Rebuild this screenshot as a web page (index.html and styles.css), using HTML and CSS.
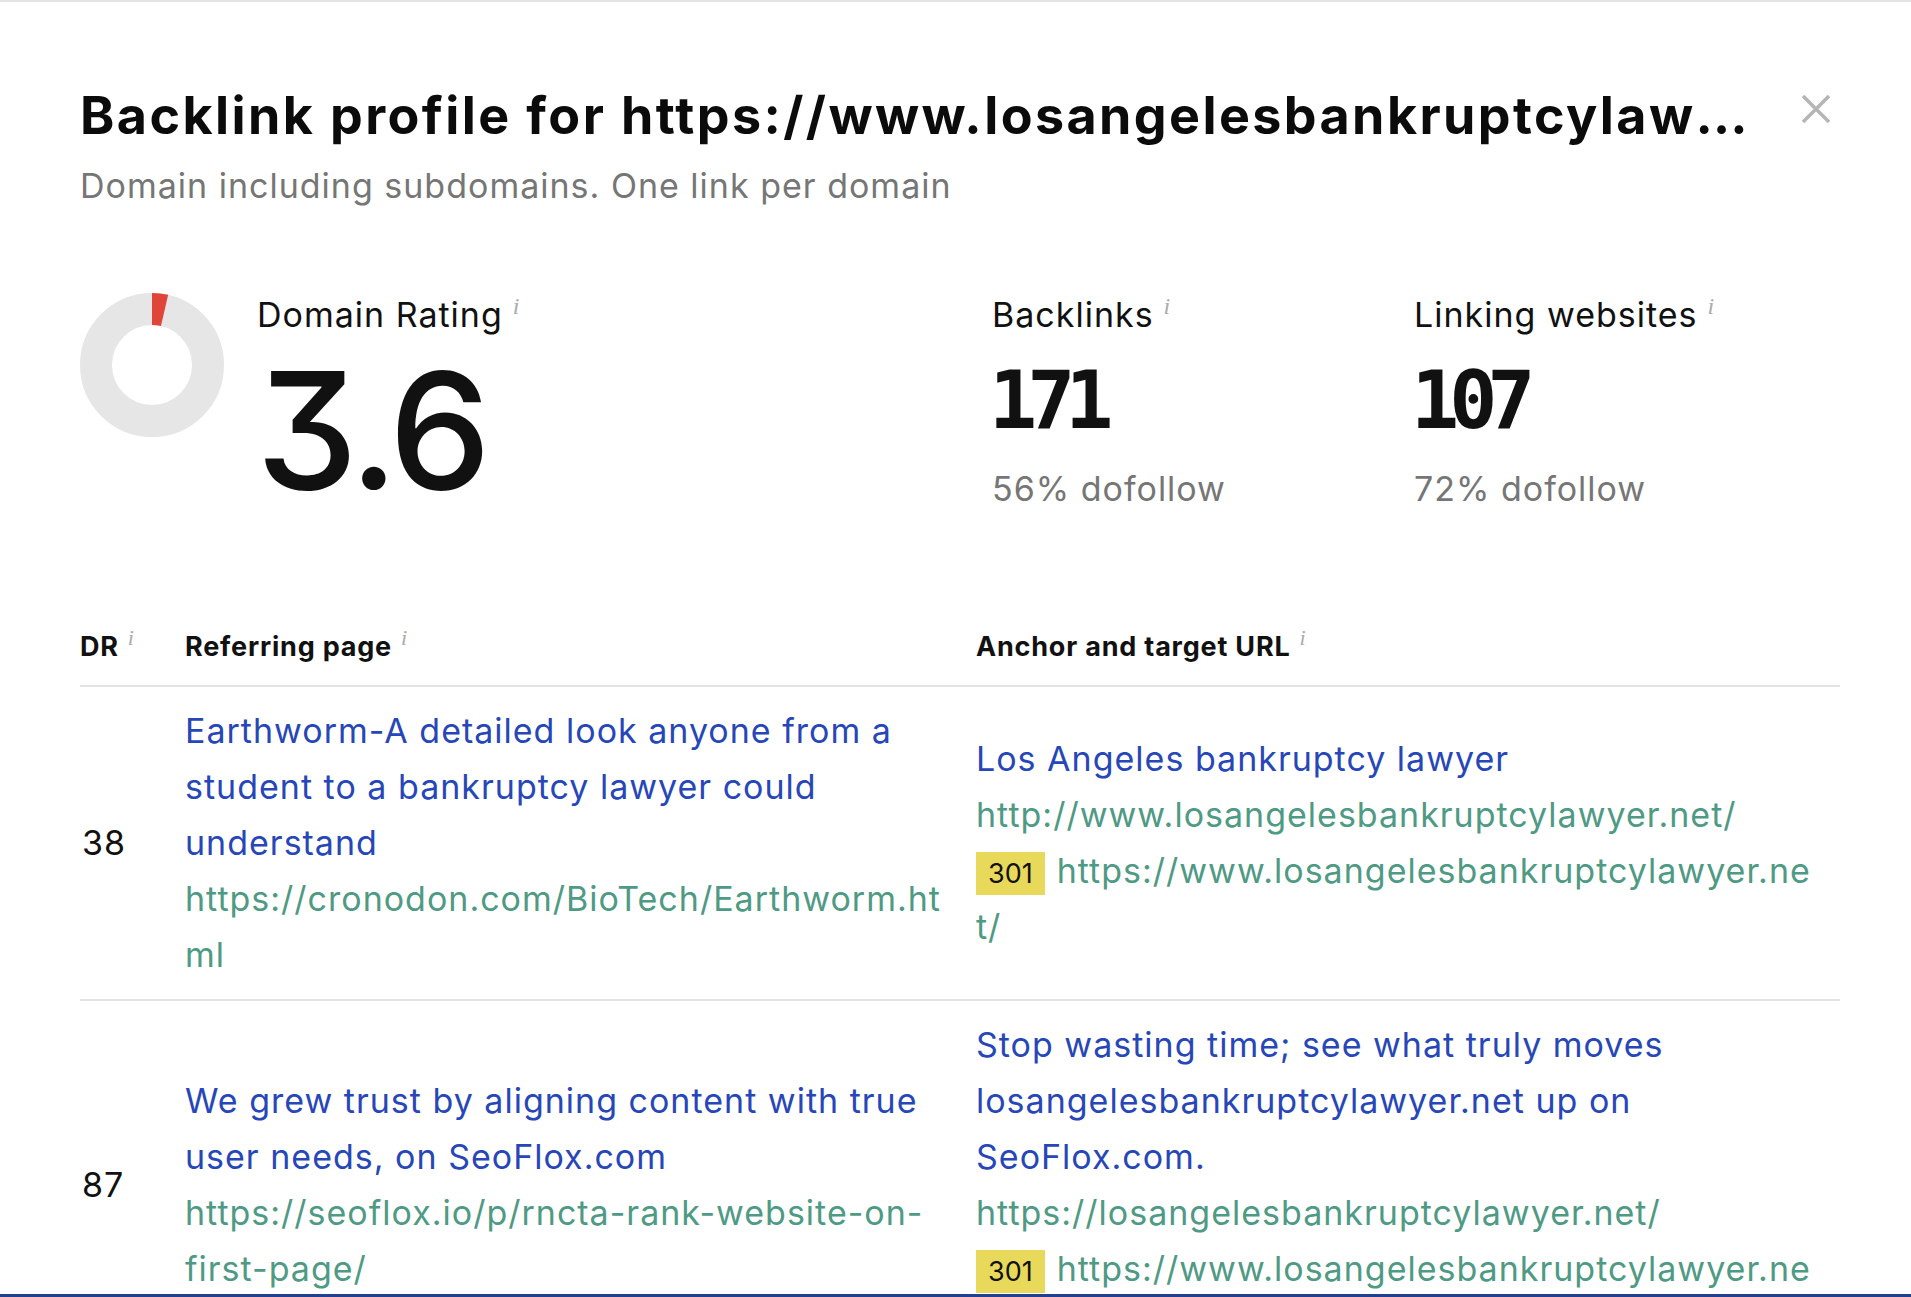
FILE: index.html
```html
<!DOCTYPE html>
<html lang="en">
<head>
<meta charset="utf-8">
<title>Backlink profile</title>
<link rel="stylesheet" href="styles.css">
</head>
<body>
<div class="page">
  <div class="modal">
    <header class="head">
      <div class="titles">
        <h1 class="title">Backlink profile for https://www.losangelesbankruptcylawyer.net/</h1>
        <p class="subtitle">Domain including subdomains. One link per domain</p>
      </div>
      <button class="close" aria-label="Close">
        <svg viewBox="0 0 32 32" width="32" height="32"><path d="M3 3 L29 29 M29 3 L3 29" stroke="#b5b5b5" stroke-width="3.6" fill="none"/></svg>
      </button>
    </header>

    <section class="stats">
      <div class="stat-dr">
        <svg class="donut" viewBox="0 0 144 144" width="144" height="144">
          <circle cx="72" cy="72" r="56" fill="none" stroke="#e6e6e6" stroke-width="32"/>
          <circle cx="72" cy="72" r="56" fill="none" stroke="#e0453a" stroke-width="32" stroke-dasharray="12.7 400" transform="rotate(-90 72 72)"/>
        </svg>
        <div class="dr-text">
          <div class="label">Domain Rating<span class="info">i</span></div>
          <div class="dr-value">3.6</div>
        </div>
      </div>
      <div class="stat">
        <div class="label">Backlinks<span class="info">i</span></div>
        <div class="big">171</div>
        <div class="sub">56% dofollow</div>
      </div>
      <div class="stat">
        <div class="label">Linking websites<span class="info">i</span></div>
        <div class="big">107</div>
        <div class="sub">72% dofollow</div>
      </div>
    </section>

    <table class="links">
      <colgroup><col class="c-dr"><col class="c-ref"><col class="c-anchor"></colgroup>
      <thead>
        <tr>
          <th>DR<span class="info">i</span></th>
          <th>Referring page<span class="info">i</span></th>
          <th>Anchor and target URL<span class="info">i</span></th>
        </tr>
      </thead>
      <tbody>
        <tr>
          <td class="dr">38</td>
          <td class="ref">
            <a class="link">Earthworm-A detailed look anyone from a student to a bankruptcy lawyer could understand</a>
            <a class="url">https://cronodon.com/BioTech/Earthworm.html</a>
          </td>
          <td class="anchor">
            <a class="link">Los Angeles bankruptcy lawyer</a>
            <a class="url target">http://www.losangelesbankruptcylawyer.net/</a>
            <div class="redirect"><span class="badge">301</span><a class="url target">https://www.losangelesbankruptcylawyer.net/</a></div>
          </td>
        </tr>
        <tr>
          <td class="dr">87</td>
          <td class="ref">
            <a class="link">We grew trust by aligning content with true user needs, on SeoFlox.com</a>
            <a class="url">https://seoflox.io/p/rncta-rank-website-on-first-page/</a>
          </td>
          <td class="anchor">
            <a class="link">Stop wasting time; see what truly moves losangelesbankruptcylawyer.net up on SeoFlox.com.</a>
            <a class="url target">https://losangelesbankruptcylawyer.net/</a>
            <div class="redirect"><span class="badge">301</span><a class="url target">https://www.losangelesbankruptcylawyer.net/</a></div>
          </td>
        </tr>
      </tbody>
    </table>
  </div>
</div>
</body>
</html>
```

FILE: styles.css
```css
* { box-sizing: border-box; }
html, body { margin: 0; background: #fff; }
body {
  font-family: Inter, "Noto Sans", "Liberation Sans", sans-serif;
  color: #111;
}
.page {
  height: 100vh;
  overflow: hidden;
  border-top: 2px solid #e3e3e3;
  border-bottom: 3px solid #233f8f;
}
.modal { padding: 83px 71px 0 80px; }

.head { display: flex; align-items: flex-start; gap: 40px; }
.titles { flex: 1; min-width: 0; }
.title {
  margin: 0;
  font-size: 52px;
  line-height: 62px;
  font-weight: 700;
  letter-spacing: 2.4px;
  white-space: nowrap;
  overflow: hidden;
  text-overflow: ellipsis;
  color: #0b0b0b;
}
.subtitle {
  margin: 17px 0 0;
  font-size: 34px;
  line-height: 43px;
  letter-spacing: 1px;
  color: #767676;
}
.close {
  width: 32px; height: 32px;
  padding: 0; border: 0; background: none;
  margin: 8px 8px 0 0;
  cursor: pointer;
}
.close svg { display: block; }

.stats {
  display: grid;
  grid-template-columns: 912px 422px 1fr;
  margin-top: 78px;
}
.stat-dr { display: flex; gap: 33px; align-items: flex-start; }
.donut { display: block; flex: none; margin-top: 8px; }
.label {
  font-size: 34px;
  line-height: 43px;
  letter-spacing: 1px;
  color: #111;
}
.info {
  font-family: "Liberation Serif", "DejaVu Serif", serif;
  font-style: italic;
  font-size: 24px;
  color: #ababab;
  vertical-align: 13px;
  margin-left: 10px;
  letter-spacing: 0;
}
.dr-value {
  font-size: 162px;
  line-height: 130px;
  font-weight: 500;
  margin-top: 29px;
  margin-left: -1px;
  letter-spacing: -5px;
  font-feature-settings: "cv09";
}
.big {
  font-family: "DejaVu Sans Mono", monospace;
  font-weight: 700;
  font-size: 80px;
  line-height: 80px;
  margin-top: 25px;
  letter-spacing: -10px;
  margin-left: -3px;
}
.sub {
  font-size: 34px;
  line-height: 43px;
  letter-spacing: 1px;
  color: #767676;
  margin-top: 26px;
}

.links {
  width: 100%;
  margin-top: 112px;
  border-collapse: collapse;
  table-layout: fixed;
}
.c-dr { width: 105px; }
.c-ref { width: 791px; }
.links th {
  text-align: left;
  font-size: 27px;
  line-height: 32px;
  font-weight: 700;
  letter-spacing: 0.8px;
  padding: 0 0 22px;
  border-bottom: 2px solid #e3e3e3;
}
.links th .info { font-size: 22px; vertical-align: 11px; margin-left: 9px; font-weight: 400; }
.links td {
  font-size: 34px;
  line-height: 56px;
  letter-spacing: 1px;
  padding: 16px 0;
  vertical-align: middle;
  border-bottom: 2px solid #e3e3e3;
}
.links td.dr { padding-left: 2px; }
.links td.ref { padding-right: 21px; }
.links td.anchor { padding-right: 24px; }
.link, .url { display: block; text-decoration: none; }
.link { color: #2747b8; }
.url { color: #4f9a84; overflow-wrap: anywhere; }
.url.target { word-break: break-all; }
.redirect .url { display: inline; }
.badge {
  display: inline-block;
  vertical-align: middle;
  height: 43px;
  line-height: 43px;
  padding: 0 12px;
  margin-right: 12px;
  background: #e9d95a;
  color: #111;
  font-size: 27px;
  letter-spacing: 0;
}
```
